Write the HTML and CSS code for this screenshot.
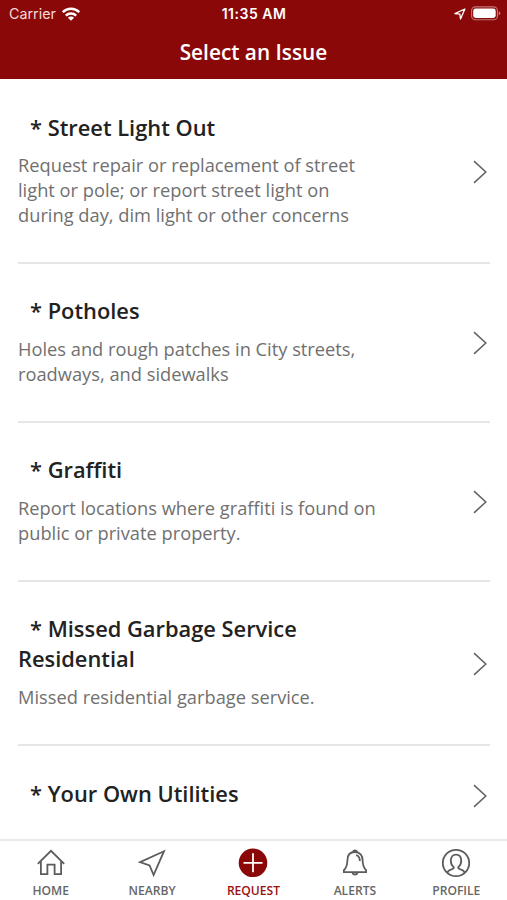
FILE: index.html
```html
<!DOCTYPE html>
<html lang="en">
<head>
  <meta charset="UTF-8">
  <meta name="viewport" content="width=device-width, initial-scale=1.0">
  <title>Select an Issue</title>
  <link rel="stylesheet" href="styles.css">
</head>
<body>
  <div class="app">
    <header class="header">
      <div class="status">
        <div class="status-left">
          <span class="carrier">Carrier</span>
          <svg class="wifi" width="18" height="14" viewBox="0 0 18 14">
            <g fill="none" stroke="#fff" stroke-width="2.5">
              <path d="M.8 5.2a11.7 11.7 0 0 1 16.4 0"/>
              <path d="M3.8 8.6a7.4 7.4 0 0 1 10.4 0"/>
            </g>
            <path d="M9 13.8L5.9 10.7a4.4 4.4 0 0 1 6.2 0z" fill="#fff"/>
          </svg>
        </div>
        <span class="time">11:35 AM</span>
        <div class="status-right">
          <svg width="12" height="12" viewBox="0 0 12 12">
            <path d="M.9 5.6L10.9 1 6.5 11 5.9 6.1z" fill="none" stroke="#fff" stroke-width="1.3" stroke-linejoin="round"/>
          </svg>
          <svg class="battery" width="30" height="15" viewBox="0 0 30 15">
            <rect x=".6" y=".9" width="25.8" height="12.8" rx="3.8" fill="none" stroke="#fff" stroke-opacity=".45" stroke-width="1.1"/>
            <rect x="2.2" y="2.6" width="22.5" height="9.4" rx="2.4" fill="#fff"/>
            <path d="M27.7 5.2q1.7.7 1.7 2.1t-1.7 2.1z" fill="#fff" fill-opacity=".45"/>
          </svg>
        </div>
      </div>
      <h1 class="title">Select an Issue</h1>
    </header>

    <main class="list">
      <a class="issue">
        <div class="issue-text">
          <h2 class="issue-name">* Street Light Out</h2>
          <p class="issue-desc">Request repair or replacement of street<br>light or pole; or report street light on<br>during day, dim light or other concerns</p>
        </div>
        <svg class="arrow" viewBox="0 0 14 24"><path d="M1 1.2L12.8 12 1 22.8"/></svg>
      </a>
      <a class="issue">
        <div class="issue-text">
          <h2 class="issue-name">* Potholes</h2>
          <p class="issue-desc">Holes and rough patches in City streets,<br>roadways, and sidewalks</p>
        </div>
        <svg class="arrow" viewBox="0 0 14 24"><path d="M1 1.2L12.8 12 1 22.8"/></svg>
      </a>
      <a class="issue">
        <div class="issue-text">
          <h2 class="issue-name">* Graffiti</h2>
          <p class="issue-desc">Report locations where graffiti is found on<br>public or private property.</p>
        </div>
        <svg class="arrow" viewBox="0 0 14 24"><path d="M1 1.2L12.8 12 1 22.8"/></svg>
      </a>
      <a class="issue">
        <div class="issue-text">
          <h2 class="issue-name">* Missed Garbage Service<br>Residential</h2>
          <p class="issue-desc">Missed residential garbage service.</p>
        </div>
        <svg class="arrow" viewBox="0 0 14 24"><path d="M1 1.2L12.8 12 1 22.8"/></svg>
      </a>
      <a class="issue">
        <div class="issue-text">
          <h2 class="issue-name">* Your Own Utilities</h2>
        </div>
        <svg class="arrow" viewBox="0 0 14 24"><path d="M1 1.2L12.8 12 1 22.8"/></svg>
      </a>
    </main>

    <nav class="tabs">
      <a class="tab">
        <svg class="tab-icon" viewBox="0 0 30 30">
          <path d="M1.8 15.8L15 2.8l13.2 13M4.9 13.6v12.6h6.5v-9.6h7.2v9.6h6.5V13.6"/>
        </svg>
        <span>HOME</span>
      </a>
      <a class="tab">
        <svg class="tab-icon" viewBox="0 0 30 30">
          <path d="M27 3.2L3 14.2l9.6 3.3 4 9.5z"/>
        </svg>
        <span>NEARBY</span>
      </a>
      <a class="tab tab-active">
        <svg class="tab-icon" viewBox="0 0 30 30">
          <circle cx="15" cy="14.8" r="14.3"/>
          <path d="M15 5.3v19M5.5 14.8h19"/>
        </svg>
        <span>REQUEST</span>
      </a>
      <a class="tab">
        <svg class="tab-icon" viewBox="0 0 30 30">
          <path d="M12.8 4a2.3 2.3 0 0 1 4.4 0M15 4c-5 0-7.6 3.4-7.6 8.2 0 5.4-1.2 7.6-3.5 10v2h22.2v-2c-2.3-2.4-3.5-4.6-3.5-10C22.6 7.4 20 4 15 4zM12.4 24.4a2.7 2.9 0 0 0 5.2 0M16.2 7.2c2.4.6 3.5 2.4 3.7 5.8"/>
        </svg>
        <span>ALERTS</span>
      </a>
      <a class="tab">
        <svg class="tab-icon" viewBox="0 0 30 30">
          <circle cx="15" cy="15" r="13.2"/>
          <path d="M6.3 24.7c.6-2 2.3-2.9 4.3-3.4 1.8-.5 2.5-1 2.1-2.2-1.9-1.5-2.9-3.5-2.9-6.3 0-3.8 2-6.2 5.2-6.2s5.2 2.4 5.2 6.2c0 2.8-1 4.8-2.9 6.3-.4 1.2.3 1.7 2.1 2.2 2 .5 3.7 1.4 4.3 3.4"/>
        </svg>
        <span>PROFILE</span>
      </a>
    </nav>
  </div>
</body>
</html>
```
FILE: styles.css
```css
* {
  box-sizing: border-box;
}
body {
  margin: 0;
  background: #fff;
  font-family: "Open Sans", "Noto Sans", sans-serif;
}
h1, h2, p {
  margin: 0;
}
.app {
  display: flex;
  flex-direction: column;
  height: 900px;
  overflow: hidden;
}

/* status bar + title */
.header {
  flex: none;
  height: 79px;
  background: #8a0808;
  color: #fff;
}
.status {
  display: grid;
  grid-template-columns: 1fr auto 1fr;
  align-items: center;
  height: 27px;
  padding: 0 6px 0 9px;
  font-family: Inter, "Liberation Sans", sans-serif;
  font-size: 14.3px;
}
.status-left, .status-right {
  display: flex;
  align-items: center;
}
.status-left {
  gap: 6px;
}
.status-right {
  justify-content: flex-end;
  gap: 5px;
}
.carrier {
  color: #f6dada;
}
.time {
  margin-right: 2px;
  font-size: 14px;
  font-weight: 600;
  letter-spacing: 0.5px;
}
.title {
  font-size: 20.8px;
  font-weight: 600;
  line-height: 50px;
  text-align: center;
}

/* issue list */
.list {
  flex: 1;
  min-height: 0;
  overflow: hidden;
  padding: 1px 17px 0 18px;
}
.issue {
  display: flex;
  align-items: center;
  justify-content: space-between;
  padding: 32.5px 3px 34.7px 0;
  border-bottom: 2px solid #e6e6e6;
}
.issue:last-child {
  padding-top: 33px;
}
.issue-name {
  color: #222;
  font-size: 21.85px;
  font-weight: 600;
  line-height: 30px;
  text-indent: 12px;
}
.issue-desc {
  margin-top: 9.8px;
  color: #707070;
  font-size: 18.27px;
  line-height: 25px;
}
.issue-text {
  white-space: nowrap;
}
.arrow {
  flex: none;
  width: 14px;
  height: 24px;
  margin-top: 4px;
  fill: none;
  stroke: #666;
  stroke-width: 1.6;
}

/* bottom tab bar */
.tabs {
  flex: none;
  display: grid;
  grid-template-columns: repeat(5, 1fr);
  height: 61px;
  padding: 7px 0 0;
  border-top: 2px solid #e9e9e9;
}
.tab {
  display: flex;
  flex-direction: column;
  align-items: center;
  color: #666;
  font-size: 12.1px;
  font-weight: 600;
  line-height: 16px;
}
.tab span {
  margin-top: 5px;
}
.tab-icon {
  width: 30px;
  height: 30px;
  fill: none;
  stroke: #5c5c5c;
  stroke-width: 1.8;
}
.tab-active {
  color: #991111;
}
.tab-active .tab-icon {
  stroke: #fff;
}
.tab-active circle {
  fill: #8a0808;
  stroke: none;
}
```
